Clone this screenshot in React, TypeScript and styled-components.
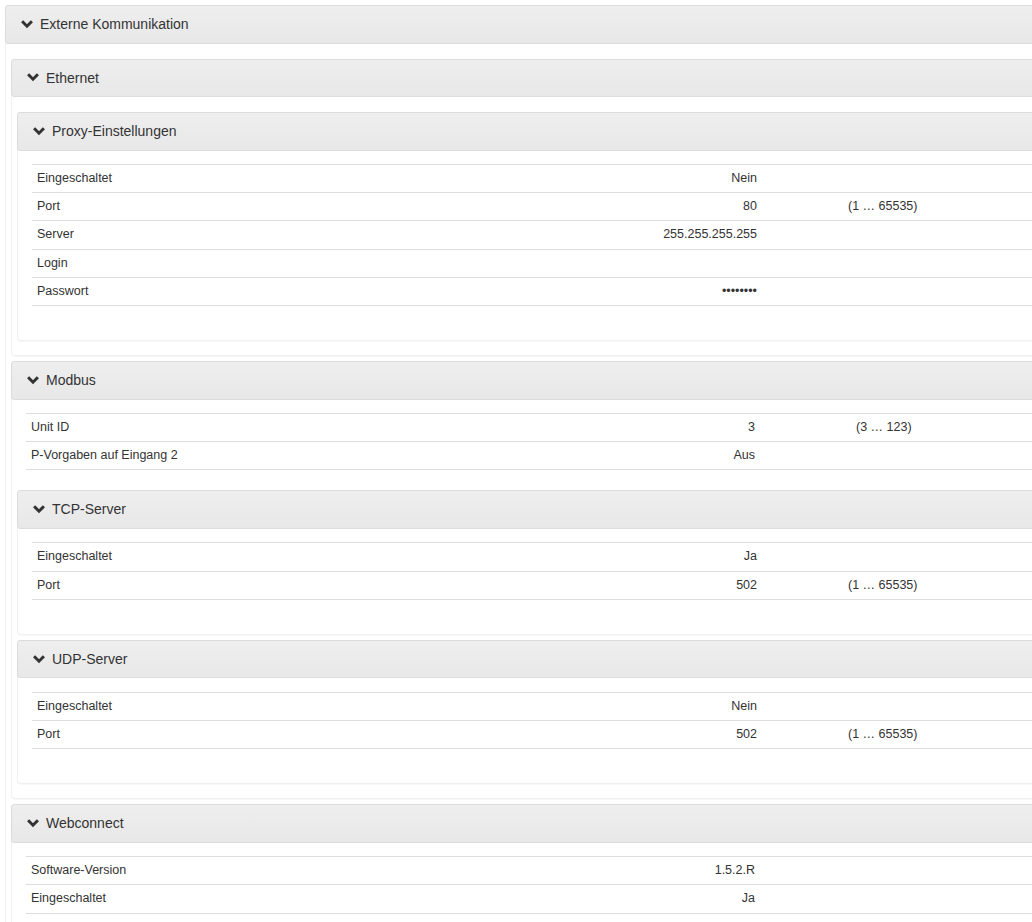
import React from "react";
import styled, { createGlobalStyle } from "styled-components";

type Zeile = { label: string; wert?: string; bereich?: string };

const proxy: Zeile[] = [
  { label: "Eingeschaltet", wert: "Nein" },
  { label: "Port", wert: "80", bereich: "(1 … 65535)" },
  { label: "Server", wert: "255.255.255.255" },
  { label: "Login" },
  { label: "Passwort", wert: "••••••••" },
];

const modbus: Zeile[] = [
  { label: "Unit ID", wert: "3", bereich: "(3 … 123)" },
  { label: "P-Vorgaben auf Eingang 2", wert: "Aus" },
];

const tcp: Zeile[] = [
  { label: "Eingeschaltet", wert: "Ja" },
  { label: "Port", wert: "502", bereich: "(1 … 65535)" },
];

const udp: Zeile[] = [
  { label: "Eingeschaltet", wert: "Nein" },
  { label: "Port", wert: "502", bereich: "(1 … 65535)" },
];

const webconnect: Zeile[] = [
  { label: "Software-Version", wert: "1.5.2.R" },
  { label: "Eingeschaltet", wert: "Ja" },
];

const Chevron = () => (
  <svg width="12" height="9" viewBox="0 0 12 9">
    <path d="M1.1 1.3 L6 6.2 L10.9 1.3" fill="none" stroke="#333" strokeWidth="3" />
  </svg>
);

type PanelProps = { titel: string; children: React.ReactNode };

const Panel: React.FC<PanelProps> = ({ titel, children }) => (
  <PanelBox>
    <Kopf>
      <Chevron />
      <Titel>{titel}</Titel>
    </Kopf>
    <Inhalt>{children}</Inhalt>
  </PanelBox>
);

// wertEnde / bereichStart: Abstand vom linken Tabellenrand in px
type TabelleProps = { zeilen: Zeile[]; wertEnde: number; bereichStart: number };

const Tabelle: React.FC<TabelleProps> = ({ zeilen, wertEnde, bereichStart }) => (
  <Liste>
    {zeilen.map((z, i) => (
      <Reihe key={i} wertEnde={wertEnde} bereichStart={bereichStart}>
        <Zelle>{z.label}</Zelle>
        <Zelle rechts>{z.wert || ""}</Zelle>
        <Zelle />
        <Zelle>{z.bereich || ""}</Zelle>
      </Reihe>
    ))}
  </Liste>
);

export default function App() {
  return (
    <>
      <Global />
      <Seite>
        <Panel titel="Externe Kommunikation">
          <Panel titel="Ethernet">
            <Panel titel="Proxy-Einstellungen">
              <Tabelle zeilen={proxy} wertEnde={730} bereichStart={811} />
            </Panel>
          </Panel>
          <Panel titel="Modbus">
            <Tabelle zeilen={modbus} wertEnde={734} bereichStart={825} />
            <Panel titel="TCP-Server">
              <Tabelle zeilen={tcp} wertEnde={730} bereichStart={811} />
            </Panel>
            <Panel titel="UDP-Server">
              <Tabelle zeilen={udp} wertEnde={730} bereichStart={811} />
            </Panel>
          </Panel>
          <Panel titel="Webconnect">
            <Tabelle zeilen={webconnect} wertEnde={734} bereichStart={825} />
          </Panel>
        </Panel>
      </Seite>
    </>
  );
}

const Global = createGlobalStyle`
  html, body {
    margin: 0;
    background: #fff;
    overflow: hidden;
  }
`;

const Seite = styled.div`
  width: 1300px;
  padding: 5px 0 0 5px;
  font-family: "Liberation Sans", Arial, sans-serif;
  color: #333;
`;

const PanelBox = styled.div`
  border: 1px solid #f0f0f0;
  border-radius: 4px;
  background: #fff;
  box-shadow: 0 1px 1px rgba(0, 0, 0, 0.03);

  & + & {
    margin-top: 5px;
  }
`;

const Kopf = styled.div`
  display: flex;
  align-items: center;
  gap: 7px;
  margin: -1px -1px 0;
  padding: 10px 15px;
  border: 1px solid #dcdcdc;
  border-radius: 3px;
  background: linear-gradient(to bottom, #eeeeee 0, #e8e8e8 100%);
`;

const Titel = styled.span`
  font-size: 14px;
  line-height: 16.5px;
`;

const Inhalt = styled.div`
  padding: 15px 5px 14px;
`;

const Liste = styled.div`
  margin: -1.5px 9px 20px;
  border-bottom: 1px solid #ddd;
`;

const Reihe = styled.div<{ wertEnde: number; bereichStart: number }>`
  display: grid;
  grid-template-columns:
    ${({ wertEnde }) => wertEnde - 160}px
    160px
    ${({ wertEnde, bereichStart }) => bereichStart - wertEnde}px
    1fr;
  border-top: 1px solid #ddd;
  font-size: 12.5px;
  line-height: 17.2px;
`;

const Zelle = styled.div<{ rechts?: boolean }>`
  padding: 5px;
  text-align: ${({ rechts }) => (rechts ? "right" : "left")};
  white-space: nowrap;
`;
